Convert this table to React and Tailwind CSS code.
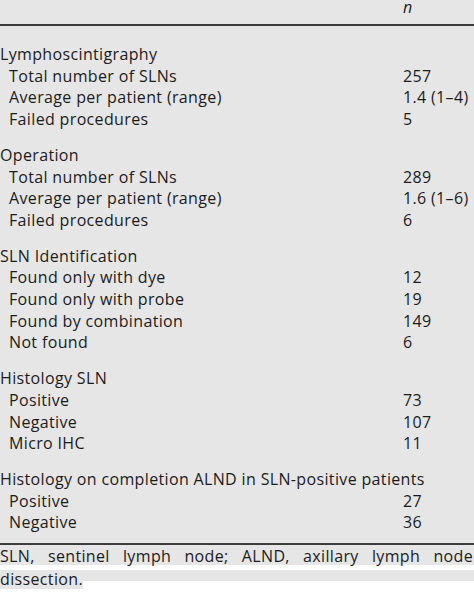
import React from "react";

const sections = [
  {
    title: "Lymphoscintigraphy",
    rows: [
      ["Total number of SLNs", "257"],
      ["Average per patient (range)", "1.4 (1\u20134)"],
      ["Failed procedures", "5"],
    ],
  },
  {
    title: "Operation",
    rows: [
      ["Total number of SLNs", "289"],
      ["Average per patient (range)", "1.6 (1\u20136)"],
      ["Failed procedures", "6"],
    ],
  },
  {
    title: "SLN Identification",
    rows: [
      ["Found only with dye", "12"],
      ["Found only with probe", "19"],
      ["Found by combination", "149"],
      ["Not found", "6"],
    ],
  },
  {
    title: "Histology SLN",
    rows: [
      ["Positive", "73"],
      ["Negative", "107"],
      ["Micro IHC", "11"],
    ],
  },
  {
    title: "Histology on completion ALND in SLN-positive patients",
    rows: [
      ["Positive", "27"],
      ["Negative", "36"],
    ],
  },
];

export default function App() {
  return (
    <div
      className="w-[474px] h-[592px] bg-white overflow-hidden text-[#1c1c1c] text-[16px] tracking-[0.35px]"
      style={{ fontFamily: "'Open Sans', 'Liberation Sans', sans-serif" }}
    >
      <div className="bg-[#e6e6e6]">
        <div className="h-[24px] grid grid-cols-[403px_1fr]">
          <div />
          <div className="italic leading-[14px]">n</div>
        </div>
        <div className="h-[2px] bg-[#3c3c3c]" />
        <div className="pt-[18px] flex flex-col gap-[14px]">
          {sections.map((s) => (
            <div key={s.title} className="flex flex-col">
              <div className="leading-[21.7px] whitespace-nowrap">{s.title}</div>
              {s.rows.map(([l, v]) => (
                <div key={l} className="grid grid-cols-[403px_1fr] leading-[21.7px]">
                  <div className="pl-[9px] whitespace-nowrap">{l}</div>
                  <div className="whitespace-nowrap">{v}</div>
                </div>
              ))}
            </div>
          ))}
        </div>
        <div className="h-[2px] bg-[#3c3c3c] mt-[9px]" />
        <div className="w-[473px] pt-[2px] leading-[18px] text-justify [text-align-last:justify] whitespace-nowrap">
          SLN, sentinel lymph node; ALND, axillary lymph node
        </div>
      </div>
      <div className="mt-[5px] h-[19px] leading-[18px] bg-[linear-gradient(to_bottom,#e6e6e6_11px,#ffffff_11px)]">
        <span className="inline-block h-[19px] bg-[#e6e6e6]">dissection.</span>
      </div>
    </div>
  );
}
